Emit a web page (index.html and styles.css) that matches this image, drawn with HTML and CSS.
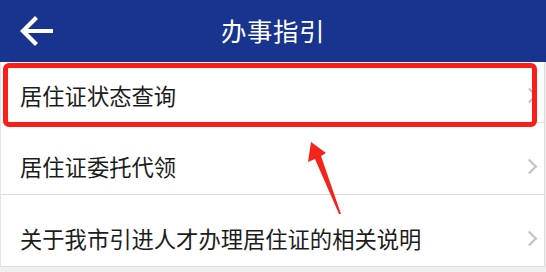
FILE: index.html
```html
<!DOCTYPE html>
<html lang="zh-CN">
<head>
<meta charset="utf-8">
<title>办事指引</title>
<link rel="stylesheet" href="styles.css">
</head>
<body>
<div class="page">
  <header class="header">
    <div class="back">
      <svg width="34" height="30" viewBox="0 0 34 30" aria-hidden="true">
        <path d="M32 15 H5 M16 3 L4 15 L16 27" fill="none" stroke="#fff" stroke-width="4.2" stroke-linecap="square" stroke-linejoin="miter"/>
      </svg>
    </div>
    <h1 class="title">办事指引</h1>
    <div class="spacer"></div>
  </header>
  <ul class="list">
    <li class="item item-first"><span class="label">居住证状态查询</span><span class="chev"></span></li>
    <li class="item"><span class="label">居住证委托代领</span><span class="chev"></span></li>
    <li class="item"><span class="label">关于我市引进人才办理居住证的相关说明</span><span class="chev"></span></li>
  </ul>
  <div class="highlight"></div>
  <svg class="pointer" width="546" height="272" viewBox="0 0 546 272" aria-hidden="true">
    <polygon points="311,142 326,153 321,156 341,214 339,214 315,159 308,162" fill="#f5231c"/>
  </svg>
</div>
</body>
</html>
```
FILE: styles.css
```css
html, body {
  margin: 0;
  padding: 0;
}
body {
  width: 546px;
  height: 272px;
  overflow: hidden;
  background: #efefef;
  font-family: "Noto Sans CJK SC", "Noto Sans", sans-serif;
}
.page {
  position: relative;
  width: 546px;
  height: 272px;
}
.header {
  height: 62px;
  background: #18348f;
  display: grid;
  grid-template-columns: 1fr auto 1fr;
  align-items: center;
}
.back {
  padding-left: 19px;
  display: flex;
  align-items: center;
  height: 30px;
}
.back svg {
  display: block;
}
.title {
  margin: 0;
  color: #fff;
  font-size: 25.5px;
  font-weight: normal;
  line-height: 1;
  letter-spacing: 0.5px;
  padding-bottom: 2px;
}
.list {
  list-style: none;
  margin: 0 1px 0 0;
  padding: 0;
  background: #fff;
  border-left: 1px solid #e4e4e4;
  border-right: 1px solid #dcdcdc;
}
.item {
  box-sizing: border-box;
  height: 72px;
  padding: 16px 5px 0 19px;
  display: flex;
  align-items: center;
  justify-content: space-between;
  border-bottom: 1px solid #dcdcdc;
}
.item-first {
  height: 61px;
  padding-top: 6px;
}
.label {
  font-size: 22.3px;
  color: #1c1c1c;
  line-height: 1;
}
.chev {
  width: 9px;
  height: 9px;
  border-top: 2px solid #c2c2c2;
  border-right: 2px solid #c2c2c2;
  transform: rotate(45deg);
  margin-right: 4px;
}
.highlight {
  position: absolute;
  left: 3px;
  top: 63px;
  width: 534px;
  height: 64px;
  box-sizing: border-box;
  border: 5px solid #fa1e16;
  border-radius: 6px;
}
.pointer {
  position: absolute;
  left: 0;
  top: 0;
}
```
